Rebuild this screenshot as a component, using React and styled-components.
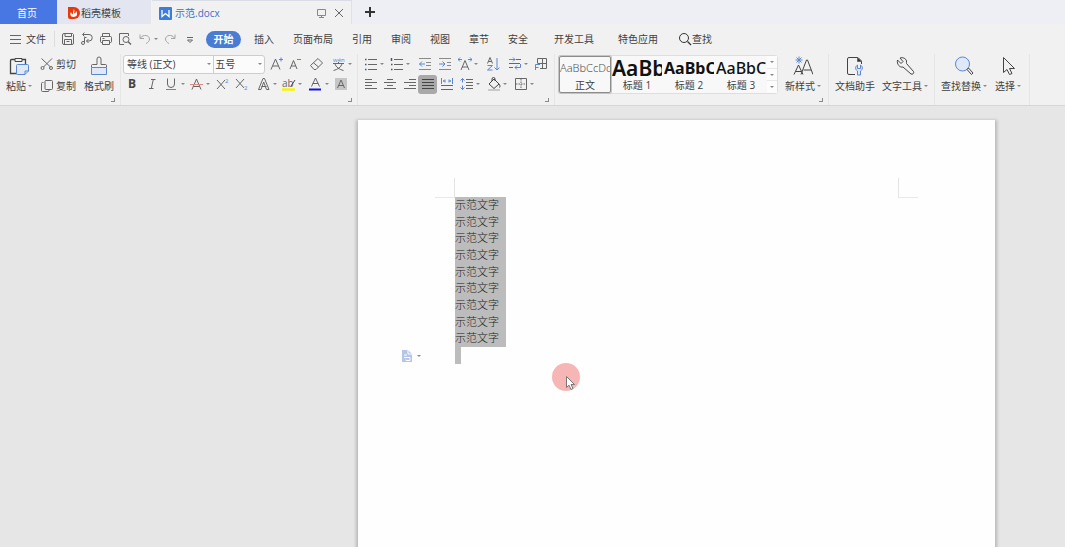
import React from 'react';
import styled, { createGlobalStyle, css } from 'styled-components';

const colors = {
  text: '#3f3f3f',
  icon: '#666',
  blue: '#5a86d2',
  bar: '#f1f1f1',
  line: '#dcdcdc',
  selection: '#bcbcbc',
};

const uiFont = '"Open Sans", "Noto Sans CJK SC", sans-serif';

const GlobalStyle = createGlobalStyle`
  *, *::before, *::after { box-sizing: border-box; }
  body {
    margin: 0;
    overflow: hidden;
    background: #e6e6e6;
    color: ${colors.text};
    font: 10px/16px ${uiFont};
  }
  button, select {
    margin: 0;
    padding: 0;
    border: 0;
    background: none;
    color: inherit;
    font: inherit;
    white-space: nowrap;
  }
  svg { display: block; flex: none; }
`;

const Window = styled.div`
  display: flex;
  flex-direction: column;
  height: 100vh;
`;

/* ---------- tabs ---------- */

const TabStrip = styled.nav`
  display: flex;
  height: 24px;
  background: #edeff5;
`;

const HomeTab = styled.button`
  width: 57px;
  padding-top: 2px;
  padding-right: 3px;
  background: #4876e3;
  color: #fff;
`;

const TemplateTab = styled.button`
  display: flex;
  align-items: center;
  gap: 1px;
  width: 95px;
  padding: 2px 0 0 11px;
  background: #e3e6f0;
  border-right: 1px solid #f1f2f6;
`;

const DocumentTab = styled.div`
  display: flex;
  align-items: center;
  width: 200px;
  padding: 1px 4px 0 7px;
  background: ${colors.bar};
  border-top: 1px solid #dadce6;
  border-right: 1px solid #dfe1ea;
`;

const DocumentName = styled.button`
  display: flex;
  align-items: center;
  gap: 3px;
  margin-right: auto;
  color: #3f6fc6;
`;

const TabAction = styled.button`
  display: grid;
  place-items: center;
  width: 17px;
  height: 20px;
`;

const AddTab = styled(TabAction)`
  width: 36px;
  height: 24px;
`;

/* ---------- menu ---------- */

const MenuBar = styled.div`
  display: flex;
  align-items: center;
  height: 30px;
  padding-left: 9px;
  background: ${colors.bar};
`;

const FileButton = styled.button`
  display: flex;
  align-items: center;
  gap: 3px;
  padding-right: 8px;
  margin-right: 6px;
  border-right: 1px solid ${colors.line};
`;

const QuickTools = styled.div`
  display: flex;
  width: 145px;
`;

const MenuTab = styled.button`
  height: 17px;
  line-height: 16px;
  padding: 0 9px 0 10px;

  ${({ $wide }) => $wide && css`
    padding: 0 12px;
  `}

  ${({ $active }) => $active && css`
    width: 35px;
    margin-right: 3px;
    padding: 0;
    border-radius: 9px;
    background: #4a7cd3;
    color: #fff;
    font-weight: 700;
  `}
`;

const WideTabs = styled.div`
  display: flex;
  padding-left: 5px;
`;

const SearchButton = styled.button`
  display: flex;
  align-items: center;
  padding-left: 8px;
`;

/* ---------- ribbon ---------- */

const Ribbon = styled.div`
  display: flex;
  height: 52px;
  background: ${colors.bar};
  border-bottom: 1px solid #d6d6d6;
`;

const Group = styled.section`
  position: relative;
  display: flex;
  padding: ${({ $pad }) => $pad || '0 6px'};
  border-right: 1px solid #e6e6e6;
`;

const Launcher = styled.button`
  position: absolute;
  right: 5px;
  bottom: 3px;
  width: 4px;
  height: 4px;
  border: solid #8a8a8a;
  border-width: 0 1px 1px 0;
`;

const Rows = styled.div`
  display: flex;
  flex-direction: column;
`;

const Row = styled.div`
  display: flex;
  align-items: center;
  height: 20px;
`;

const Tool = styled.button`
  display: flex;
  align-items: center;
  gap: 2px;
  width: ${({ $w }) => $w}px;
  height: 18px;
`;

const PressedTool = styled.button`
  display: grid;
  place-items: center;
  width: 19px;
  height: 19px;
  margin: 0 3px 0 -3px;
  border-radius: 3px;
  background: #a9a9a9;
`;

const Caret = styled.i`
  flex: none;
  width: 0;
  height: 0;
  border: solid transparent;
  border-width: 2px 2px 0;
  border-top-color: #888;
`;

const LabelTool = styled.button`
  display: flex;
  align-items: center;
  gap: 2px;
  height: 20px;
`;

const ClipboardColumn = styled.div`
  display: flex;
  flex-direction: column;
  gap: 2px;
  padding: 0 8px;
`;

const BigTool = styled.button`
  display: flex;
  flex-direction: column;
  align-items: center;
  height: 42px;
  padding-top: 2px;
`;

const BigLabel = styled.span`
  display: flex;
  align-items: center;
  gap: 2px;
  height: 20px;
`;

const Combo = styled.div`
  display: flex;
  width: 142px;
  height: 19px;
  margin-right: 5px;
  background: #fbfbfb;
  border: 1px solid #cdcdcd;
  border-radius: 3px;
`;

const ComboField = styled.label`
  display: flex;
  align-items: center;
  flex: ${({ $grow }) => $grow} 1 0;
  min-width: 0;
  padding: 0 2px 0 3px;

  & + & {
    padding-left: 1px;
    border-left: 1px solid #cdcdcd;
  }
`;

const Select = styled.select`
  appearance: none;
  flex: 1;
  min-width: 0;
  outline: 0;
`;

const Gallery = styled.div`
  display: flex;
  width: 220px;
  height: 39px;
  margin-top: 1px;
  background: #f8f8f8;
  border: 1px solid #dedede;
  border-radius: 3px;
`;

const StyleItem = styled.button`
  display: flex;
  flex-direction: column;
  width: 52px;
  height: 37px;
  border: 1px solid transparent;
  border-radius: 2px;
  overflow: hidden;

  ${({ $active }) => $active && css`
    border-color: #8c8c8c;
    box-shadow: 0 0 0 1px #c4c4c4;
  `}
`;

const StyleSample = styled.span`
  height: 21px;
  line-height: 22px;
  color: ${({ $weight }) => ($weight < 400 ? '#555' : '#111')};
  font-family: "Noto Sans", sans-serif;
  font-size: ${({ $size }) => $size}px;
  font-weight: ${({ $weight }) => $weight};
`;

const StyleName = styled.span`
  width: 100%;
  height: 14px;
  line-height: 14px;
  text-align: center;
`;

const GallerySteps = styled.div`
  display: flex;
  flex-direction: column;
  flex: 1;
  background: #fcfcfc;
`;

const GalleryStep = styled.button`
  display: grid;
  place-items: center;
  flex: 1;

  & + & { border-top: 1px solid #e8e8e8; }
`;

/* ---------- document ---------- */

const Workspace = styled.main`
  display: flex;
  flex: 1;
  justify-content: flex-end;
  min-height: 0;
  padding: 14px 70px 0 0;
  overflow: hidden;
  background: #e6e6e6;
`;

const Paper = styled.article`
  position: relative;
  width: 637px;
  padding-top: 58px;
  background: #fefefe;
  box-shadow: 0 2px 3px 2px rgba(0, 0, 0, 0.2);
`;

const Corners = styled.div`
  display: flex;
  justify-content: space-between;
  padding: 0 77px;
`;

const Corner = styled.span`
  width: 20px;
  height: 20px;
  margin-bottom: -1px;
  border-bottom: 1px solid #e8e8e8;
  ${({ $side }) => ($side === 'left' ? 'border-right' : 'border-left')}: 1px solid #e4e4e4;
`;

const Selection = styled.div`
  display: grid;
  grid-auto-rows: 1fr;
  width: 51px;
  height: 150px;
  margin-left: 97px;
  background: ${colors.selection};
`;

const Line = styled.p`
  margin: 0;
  color: #222;
  font: 300 11px/15px "Noto Sans CJK SC", sans-serif;
  white-space: nowrap;
`;

const LastLine = styled.div`
  display: flex;
  align-items: center;
  width: 103px;
  height: 17px;
  padding-left: 43px;
  border-right: 6px solid ${colors.selection};
`;

const Pointer = styled.div`
  position: absolute;
  left: 194px;
  top: 243px;
  width: 28px;
  height: 28px;
  padding: 13px 0 0 14px;
  border-radius: 50%;
  background: #f7b6b6;
`;

/* ---------- icons ---------- */

const B = colors.blue;
const letter = { fontFamily: 'Open Sans', stroke: 'none', fill: colors.icon };

const icons = {
  menu: <path d="M1 3.500h11M1 7.500h11M1 11.500h11" />,
  save: <path d="M3 1.500h8.500l1 1v8.500a1.500 1.500 0 0 1-1.500 1.500H3A1.500 1.500 0 0 1 1.500 11V3A1.500 1.500 0 0 1 3 1.500zM4 1.500v3h6.500v-3M3.500 12.500v-5h7v5M5.500 9.500h3" />,
  share: <path d="M3 2.500h6a3 3 0 0 1 0 6.500H6.500M4.500 .5l-2 2 2 2M8.500 7l-2 2 2 2M6.500 5.500h-2v5.500a1.500 1.500 0 1 1-1.500-1.500h1.500" />,
  print: <path d="M3.500 4.500v-3h7v3M3.500 10.500h-1a1 1 0 0 1-1-1v-4a1 1 0 0 1 1-1h9a1 1 0 0 1 1 1v4a1 1 0 0 1-1 1h-1M3.500 8.500h7v4h-7zM3.500 6.500h2" />,
  preview: <><path d="M6 12.500H1.500v-11h9V4" /><circle cx="8" cy="7.500" r="3" /><path d="M10.200 9.800l2.800 2.700" strokeWidth="1.500" /></>,
  undo: <path d="M2 2.500v4h4M2.500 6C5 2 11.500 3 11.500 7c0 2-1.500 3.500-3.500 4.500" stroke="#a5a5a5" />,
  redo: <path d="M12 2.500v4H8M11.500 6C9 2 2.500 3 2.500 7c0 2 1.500 3.500 3.500 4.500" stroke="#a5a5a5" />,
  more: <path d="M4 5.500h6M4.500 8l2.500 2.500L9.500 8z" />,
  search: <><circle cx="6" cy="6" r="4.500" stroke="#333" /><path d="M9.500 9.500l3.500 3.500" stroke="#333" strokeWidth="1.300" /></>,
  cut: <><path d="M1.500 1.500l9 8.500M12 1.500L3.500 10" /><circle cx="2.500" cy="11" r="1.500" /><circle cx="11" cy="11" r="1.500" /></>,
  copy: <path d="M6 1.500h5.500a1 1 0 0 1 1 1v7a1 1 0 0 1-1 1H6a1 1 0 0 1-1-1v-7a1 1 0 0 1 1-1zM3.500 3.500h-1a1 1 0 0 0-1 1v7a1 1 0 0 0 1 1H8a1 1 0 0 0 1-1v-.5" />,
  grow: <><path d="M1 12.500L5.500 2l4.500 10.500M2.700 9h5.600" /><path d="M9 2.500h4M11 .5v4" stroke={B} /></>,
  shrink: <><path d="M1 12L4.500 3.500 8 12M2.300 9h4.500" /><path d="M8 2.500h4" stroke={B} /></>,
  eraser: <path d="M.5 8.500L8 1.500 12.500 6 6 12.500H4zM3.500 5.800L8.500 10" />,
  pinyin: <><text x="1" y="5" fontSize="6" {...letter} fill={B}>wén</text><path d="M1 6.500h11M6.500 5v1.500M3 7c1 3 4 5.500 8.500 6.500M10 7c-1 3-4 5.500-8.500 6.500" /></>,
  bold: <text x="1" y="11" fontSize="12" fontWeight="700" {...letter} fill="#444">B</text>,
  italic: <path d="M4 2.500h4.500M2 11.500h4.500M6.300 2.500l-2 9" />,
  underline: <><path d="M2.500 1.500v5.500a3.500 3.500 0 0 0 7 0V1.500" /><path d="M1 12.500h10" stroke={B} /></>,
  strike: <><path d="M2 12.500L6.500 2 11 12.500M3.500 9.500h6" /><path d="M0 7.500h13" stroke="#de8a80" /></>,
  sup: <><path d="M1 3l8 9M9 3l-8 9" /><text x="9" y="6" fontSize="6" {...letter} fill={B}>2</text></>,
  sub: <><path d="M1 2l8 9M9 2l-8 9" /><text x="9" y="13" fontSize="6" {...letter} fill={B}>2</text></>,
  effect: <path d="M1.500 12.500L6 1.500h1.500L12 12.500H9.500L6.700 5 4 12.500zM4.500 9.500h5" />,
  highlight: <><text x="0" y="10" fontSize="10" {...letter}>ab</text><path d="M9 9l4-6" stroke="#444" /><path d="M0 12.500h13" stroke="#f6f600" strokeWidth="2.500" /></>,
  color: <><path d="M2.500 9.500L6.500 1l4 8.500M3.800 6.500h5.400" /><path d="M0 12.500h12" stroke="#1414e0" strokeWidth="2" /></>,
  shade: <><rect x="1" y="1" width="12" height="12" fill="#c6c6c6" stroke="none" /><path d="M3.500 11L7 3l3.500 8M4.500 8.500h5" /></>,
  bullets: <><path d="M4 2.500h9M4 7.500h9M4 12.500h9" /><path d="M1 2.500h1.500M1 7.500h1.500M1 12.500h1.500" stroke="#4c5568" strokeWidth="1.500" /></>,
  numbers: <><path d="M4 2.500h9M4 7.500h9M4 12.500h9" /><path d="M1.500 1v3M1 7.500h1.500M1 12.500h1.500" stroke="#4c5568" strokeWidth="1.500" /></>,
  outdent: <><path d="M1 1.500h12M8 5.500h5M8 8.500h5M1 12.500h12" stroke="#8a8a8a" /><path d="M1.500 7H7M4 4.500L1.500 7 4 9.500" stroke={B} /></>,
  indent: <><path d="M1 1.500h12M9 5.500h4M9 8.500h4M1 12.500h12" stroke="#8a8a8a" /><path d="M1 7h6M4.500 4.500L7 7 4.500 9.500" stroke={B} /></>,
  scale: <><path d="M3 13L7 3.500 11 13M4.300 10h5.400" /><path d="M0 2.500h4M2 .5l-2 2 2 2M14 2.500h-4M12 .5l2 2-2 2" stroke={B} /></>,
  sort: <><path d="M1.500 6.500L4 .5l2.500 6M2.300 4.500h3.400" /><path d="M1.500 8.500h5l-5 4.500h5M11 1v12M8.500 10.500L11 13l2.500-2.500" stroke={B} /></>,
  wrap: <><path d="M8 2.500h5M1 6.500h11M1 10.500h4" /><path d="M1 2.500h6M5 .5l2 2-2 2M12.500 7v3.500H7M9 8.500l-2 2 2 2" stroke={B} /></>,
  table: <><path d="M3.500 6V1.500h9v10H6M8.500 1.500v10M3.500 6.500h9" /><path d="M1.500 13V7.500H6M1.500 10.500h3" stroke={B} /></>,
  left: <path d="M1 2.500h7M1 5.500h12M1 8.500h7M1 11.500h12" />,
  center: <path d="M4 2.500h6M1 5.500h12M4 8.500h6M1 11.500h12" />,
  right: <path d="M6 2.500h7M1 5.500h12M6 8.500h7M1 11.500h12" />,
  justify: <path d="M1 2.500h12M1 5.500h12M1 8.500h12M1 11.500h12" stroke="#444" />,
  distribute: <><path d="M1 8.500h12M1 12.500h12" /><path d="M1.500 1v6M12.500 1v6M3 4h3M5 2.500L3.500 4 5 5.500M11 4H8M9 2.500L10.500 4 9 5.500" stroke={B} /></>,
  spacing: <><path d="M6 2.500h7M6 5.500h7M6 8.500h7M6 11.500h7" /><path d="M2.500 1.500v4M.5 3.500l2-2 2 2M2.500 8.500v4M.5 10.500l2 2 2-2" stroke={B} /></>,
  bucket: <><path d="M2 7l5-5 5 5-5 4.500zM5 4V2a1.500 1.500 0 0 1 3 0v2M12 7c1 1.500 1.500 3 .5 3.500" stroke="#444" /><path d="M1 13h12" stroke="#bbb" strokeWidth="1.500" /></>,
  border: <><path d="M1.500 1.500h11v11h-11z" /><path d="M7 2v10M2 7h10" strokeDasharray="1.500 1" /></>,
};

function Icon({ name, size = 14 }) {
  return (
    <svg width={size} height={size} viewBox="0 0 14 14" fill="none" stroke={colors.icon} aria-hidden="true">
      {icons[name]}
    </svg>
  );
}

const bigIcons = {
  paste: <><path d="M6 3.500H2.500a1 1 0 0 0-1 1v13h7M13 3.500h3.500V8" stroke="#444" strokeWidth="1.300" /><path d="M6 2.500h7v3H6z" stroke="#444" /><path d="M8.500 8.500h10a1 1 0 0 1 1 1V15l-3.500 3.500H8.500a1 1 0 0 1-1-1v-8a1 1 0 0 1 1-1zM19.500 15H16v3.500" fill="#dfe8f7" stroke={B} /></>,
  brush: <><path d="M2.500 11V9.500a1 1 0 0 1 1-1H8V3a1.500 1.500 0 0 1 4 0v5.500h4.500a1 1 0 0 1 1 1V11" /><path d="M2.500 11.500h15v7h-15z" fill="#dfe8f7" stroke={B} /></>,
  styles: <><path d="M1 18.500L5.500 9l4.500 9.500M8 18.500L13.500 4h1L20 18.500M3 15.500h5M10.500 14h7.500" stroke="#444" /><path d="M6 .5v7M2.500 4h7M3.500 1.500l5 5M8.500 1.500l-5 5" stroke={B} /></>,
  helper: <><path d="M10 18.500H4A1.500 1.500 0 0 1 2.500 17V3A1.500 1.500 0 0 1 4 1.500h9L16.500 5v3" stroke="#444" /><path d="M12.500 1.500l4 4h-4z" fill="#333" /><path d="M12.500 9c-2.500 1.500-2.500 4.500 0 6v4h3v-4c2.500-1.500 2.500-4.500 0-6v3.500h-3z" fill="#dfe8f7" stroke={B} /></>,
  wrench: <path d="M2.500 4L6 7.500 8 5.500 5 2C8 1 11 2.500 11.500 5c.2 1-.2 2 0 2.500l7 8c1 1.500-1 3.500-2.500 2.500l-8-7c-3 .8-6.500-2.500-5.500-7z" stroke="#444" />,
  find: <><circle cx="8.500" cy="8" r="7" fill="#dfe8f7" stroke={B} /><path d="M13 13.500l1.500-1.500 4.500 5-1.500 1.500z" stroke="#444" /></>,
  select: <path d="M5.500 1.500v15l3.500-3 2.500 5 2.500-1-2.500-5h5z" stroke="#444" />,
};

function BigIcon({ name }) {
  return (
    <svg width="20" height="20" viewBox="0 0 20 20" fill="none" stroke={colors.icon} aria-hidden="true">
      {bigIcons[name]}
    </svg>
  );
}

/* ---------- data ---------- */

// [icon, cell width, has drop-down]
const fontTop = [['grow', 19], ['shrink', 21], ['eraser', 22], ['pinyin', 21, true]];
const fontBottom = [
  ['bold', 20], ['italic', 18], ['underline', 25, true], ['strike', 26, true], ['sup', 19],
  ['sub', 22], ['effect', 25, true], ['highlight', 27, true], ['color', 25, true], ['shade', 16],
];
const paraTop = [
  ['bullets', 26, true], ['numbers', 28, true], ['outdent', 20], ['indent', 20],
  ['scale', 28, true], ['sort', 22], ['wrap', 26, true], ['table', 14],
];
const paraAlign = [['left', 19], ['center', 20], ['right', 18]];
const paraBottom = [['distribute', 20], ['spacing', 27, true], ['bucket', 27, true], ['border', 22, true]];

const quick = [
  ['save', 19], ['share', 19], ['print', 19], ['preview', 20], ['undo', 25, true], ['redo', 20], ['more', 14],
];

const menuTabs = ['插入', '页面布局', '引用', '审阅', '视图', '章节', '安全'];

const gallery = [
  { name: '正文', sample: 'AaBbCcDd', size: 11, weight: 300, active: true },
  { name: '标题 1', sample: 'AaBb', size: 21, weight: 600 },
  { name: '标题 2', sample: 'AaBbC', size: 16, weight: 700 },
  { name: '标题 3', sample: 'AaBbC', size: 16, weight: 500 },
];

const lines = Array(9).fill('示范文字');

function Tools({ items }) {
  return items.map(([name, w, caret]) => (
    <Tool key={name} $w={w} aria-label={name}>
      <Icon name={name} />
      {caret && <Caret />}
    </Tool>
  ));
}

function Big({ icon, label, caret }) {
  return (
    <BigTool>
      <BigIcon name={icon} />
      <BigLabel>{label}{caret && <Caret />}</BigLabel>
    </BigTool>
  );
}

function Tabs() {
  return (
    <TabStrip>
      <HomeTab>首页</HomeTab>
      <TemplateTab>
        <svg width="12" height="12" viewBox="0 0 12 12" aria-hidden="true">
          <path d="M0 0h6a6 6 0 0 1 0 12H2a2 2 0 0 1-2-2z" fill="#e8380d" />
          <path d="M5.500 2c2 2 0 3 1 4.500C7.500 6 8 5 8 4c2.500 3 .5 6-2.500 6S1.500 7 3 5c.5 1.500 1 2 2 2.500C4.500 5.500 6 4 5.500 2z" fill="#fff" />
        </svg>
        稻壳模板
      </TemplateTab>
      <DocumentTab>
        <DocumentName>
          <svg width="13" height="13" viewBox="0 0 13 13" aria-hidden="true">
            <rect width="13" height="13" rx="1" fill="#3b7ddd" />
            <path d="M3 3v6.500l3.500-3 3.500 3V3" fill="none" stroke="#fff" strokeWidth="1.300" />
          </svg>
          示范.docx
        </DocumentName>
        <TabAction aria-label="screen">
          <svg width="11" height="11" viewBox="0 0 11 11" fill="none" stroke="#888" aria-hidden="true">
            <path d="M1.500 1.500h8v6h-8zM5.500 7.500v2M3 9.500h5" />
          </svg>
        </TabAction>
        <TabAction aria-label="close">
          <svg width="10" height="10" viewBox="0 0 10 10" stroke="#666" aria-hidden="true">
            <path d="M1 1l8 8M9 1L1 9" />
          </svg>
        </TabAction>
      </DocumentTab>
      <AddTab aria-label="add">
        <svg width="10" height="10" viewBox="0 0 10 10" stroke="#333" strokeWidth="2" aria-hidden="true">
          <path d="M5 0v10M0 5h10" />
        </svg>
      </AddTab>
    </TabStrip>
  );
}

function Menu() {
  return (
    <MenuBar>
      <FileButton><Icon name="menu" />文件</FileButton>
      <QuickTools><Tools items={quick} /></QuickTools>
      <MenuTab $active>开始</MenuTab>
      {menuTabs.map(tab => <MenuTab key={tab}>{tab}</MenuTab>)}
      <WideTabs>
        <MenuTab $wide>开发工具</MenuTab>
        <MenuTab $wide>特色应用</MenuTab>
      </WideTabs>
      <SearchButton><Icon name="search" />查找</SearchButton>
    </MenuBar>
  );
}

function Toolbar() {
  return (
    <Ribbon>
      <Group $pad="0 6px">
        <Big icon="paste" label="粘贴" caret />
        <ClipboardColumn>
          <LabelTool><Icon name="cut" />剪切</LabelTool>
          <LabelTool><Icon name="copy" />复制</LabelTool>
        </ClipboardColumn>
        <Big icon="brush" label="格式刷" />
        <Launcher aria-label="clipboard options" />
      </Group>

      <Group $pad="0 4px 0 2px">
        <Rows>
          <Row>
            <Combo>
              <ComboField $grow={9}>
                <Select aria-label="font"><option>等线 (正文)</option></Select>
                <Caret />
              </ComboField>
              <ComboField $grow={5}>
                <Select aria-label="size"><option>五号</option></Select>
                <Caret />
              </ComboField>
            </Combo>
            <Tools items={fontTop} />
          </Row>
          <Row><Tool as="span" $w={4} /><Tools items={fontBottom} /></Row>
        </Rows>
        <Launcher aria-label="font options" />
      </Group>

      <Group $pad="0 6px">
        <Rows>
          <Row><Tools items={paraTop} /></Row>
          <Row>
            <Tools items={paraAlign} />
            <PressedTool aria-label="justify"><Icon name="justify" /></PressedTool>
            <Tools items={paraBottom} />
          </Row>
        </Rows>
        <Launcher aria-label="paragraph options" />
      </Group>

      <Group $pad="0 7px 0 3px">
        <Gallery>
          {gallery.map(({ name, sample, size, weight, active }) => (
            <StyleItem key={name} $active={active}>
              <StyleSample $size={size} $weight={weight}>{sample}</StyleSample>
              <StyleName>{name}</StyleName>
            </StyleItem>
          ))}
          <GallerySteps>
            <GalleryStep aria-label="previous"><Caret /></GalleryStep>
            <GalleryStep aria-label="next"><Caret /></GalleryStep>
            <GalleryStep aria-label="all styles"><Caret /></GalleryStep>
          </GallerySteps>
        </Gallery>
        <Tool as="span" $w={7} />
        <Big icon="styles" label="新样式" caret />
        <Launcher aria-label="style options" />
      </Group>

      <Group $pad="0 6px">
        <Big icon="helper" label="文档助手" />
        <Tool as="span" $w={7} />
        <Big icon="wrench" label="文字工具" caret />
      </Group>

      <Group $pad="0 8px 0 6px">
        <Big icon="find" label="查找替换" caret />
        <Tool as="span" $w={8} />
        <Big icon="select" label="选择" caret />
      </Group>
    </Ribbon>
  );
}

export default function App() {
  return (
    <Window>
      <GlobalStyle />
      <Tabs />
      <Menu />
      <Toolbar />
      <Workspace>
        <Paper>
          <Corners>
            <Corner $side="left" />
            <Corner $side="right" />
          </Corners>
          <Selection>
            {lines.map((line, i) => <Line key={i}>{line}</Line>)}
          </Selection>
          <LastLine>
            <Tool $w={24} aria-label="paste options">
              <svg width="14" height="14" viewBox="0 0 14 14" aria-hidden="true">
                <path d="M1 1h6l4 4v8H1z" fill="#b4c5e6" />
                <path d="M7 1v4h4M3 6h3M3 8.500h6v3H5v-1" fill="none" stroke="#fff" />
              </svg>
              <Caret />
            </Tool>
          </LastLine>
          <Pointer>
            <svg width="10" height="15" viewBox="0 0 10 15" aria-hidden="true">
              <path d="M.5 .5v11l2.500-2.300 2 4.300 2-1-2-4h3.500z" fill="#fff" stroke="#777" />
            </svg>
          </Pointer>
        </Paper>
      </Workspace>
    </Window>
  );
}
